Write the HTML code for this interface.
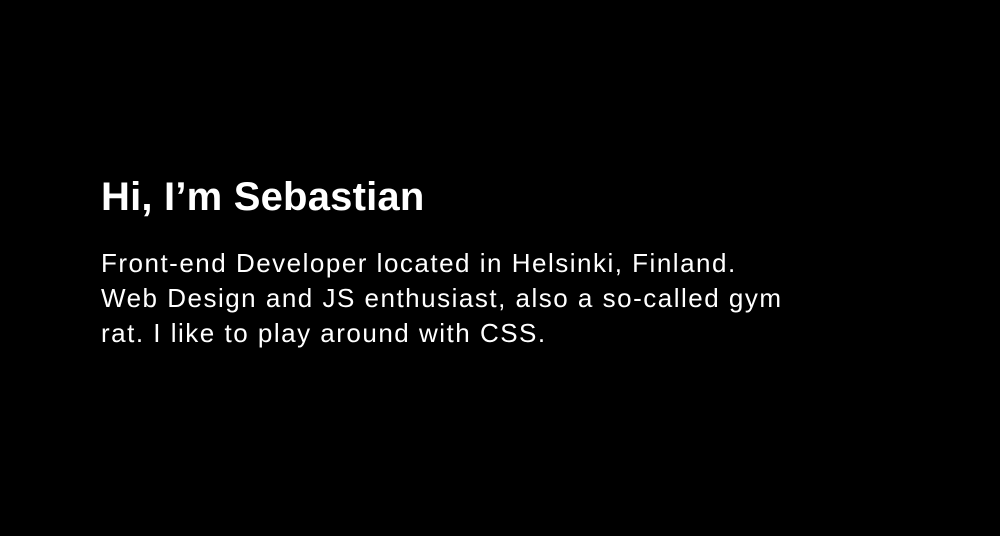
<!DOCTYPE html>
<html><head><meta charset="utf-8"><style>
html,body{margin:0;width:1000px;height:536px;background:#000;overflow:hidden}
body{font-family:"Liberation Sans",sans-serif;color:#fff;position:relative}
h1{position:absolute;left:101px;top:171px;margin:0;font-size:40px;font-weight:700;line-height:52px;letter-spacing:0.2px;white-space:nowrap}
p{position:absolute;left:101px;top:246px;margin:0;font-size:26px;line-height:35px;letter-spacing:1.5px;white-space:nowrap}
</style></head><body>
<h1>Hi, I’m Sebastian</h1>
<p>Front-end Developer located in Helsinki, Finland.<br>Web Design and JS enthusiast, also a so-called gym<br>rat. I like to play around with CSS.</p>
</body></html>
